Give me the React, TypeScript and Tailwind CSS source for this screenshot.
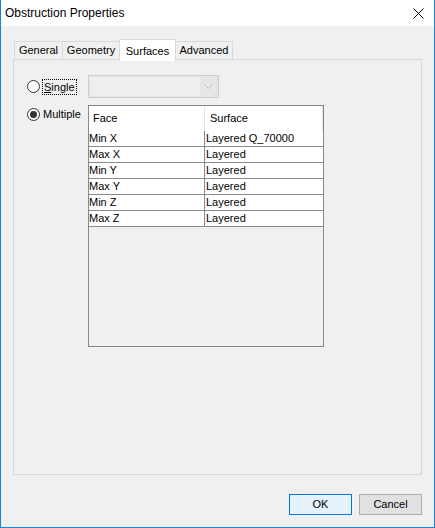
const rows = [
  { face: "Min X", surface: "Layered Q_70000" },
  { face: "Max X", surface: "Layered" },
  { face: "Min Y", surface: "Layered" },
  { face: "Max Y", surface: "Layered" },
  { face: "Min Z", surface: "Layered" },
  { face: "Max Z", surface: "Layered" },
];

const tabs = [
  { label: "General", width: "w-[49px]" },
  { label: "Geometry", width: "w-[58px]" },
  { label: "Surfaces", width: "w-[57px]", active: true },
  { label: "Advanced", width: "w-[58px]" },
];

function Radio({ checked }: { checked?: boolean }) {
  return (
    <span className="flex size-[13px] shrink-0 items-center justify-center rounded-full border border-[#333333] bg-white">
      {checked && <span className="size-[7px] rounded-full bg-[#333333]" />}
    </span>
  );
}

export default function App() {
  return (
    <div className="flex h-[528px] w-[435px] flex-col border-x border-b border-[#1883d7] bg-[#f0f0f0] font-['Liberation_Sans',Arial,sans-serif] text-[11px] text-black">
      <div className="flex h-[26px] shrink-0 items-center justify-between bg-white pl-[4px] pr-[10px]">
        <span className="text-[12px]">Obstruction Properties</span>
        <svg width="11" height="11" viewBox="0 0 11 11" className="mt-[1px]">
          <path d="M0.5 0.5 L10.5 10.5 M10.5 0.5 L0.5 10.5" stroke="#000" strokeWidth="1" />
        </svg>
      </div>

      <div className="flex flex-1 flex-col px-[12px] pt-[13px]">
        <div className="flex h-[20px] items-end pl-[1px]">
          {tabs.map((tab, i) =>
            tab.active ? (
              <div
                key={tab.label}
                className={`relative z-10 -mb-[2px] flex h-[22px] ${tab.width} items-start justify-center border-x border-t border-[#d9d9d9] bg-white pt-[3px] ${i > 0 ? "-ml-px" : ""}`}
              >
                {tab.label}
              </div>
            ) : (
              <div
                key={tab.label}
                className={`flex h-[18px] ${tab.width} items-center justify-center border-x border-t border-[#d9d9d9] bg-[#f0f0f0] ${i > 0 ? "-ml-px" : ""}`}
              >
                {tab.label}
              </div>
            ),
          )}
        </div>

        <div className="flex h-[416px] flex-col border border-[#d9d9d9] bg-[#f0f0f0] pl-[13px] pt-[15px]">
          <div className="flex h-[23px] items-center">
            <div className="flex w-[61px] items-center">
              <Radio />
              <span className="ml-[2px] border border-dotted border-black px-[1px] leading-[14px]">
                <span className="underline">S</span>ingle
              </span>
            </div>
            <div className="flex h-[23px] w-[131px] items-center justify-end border border-[#cccccc] bg-[#e6e6e6] p-[1px]">
              <div className="h-full flex-1 bg-[#eeeeee]" />
              <div className="flex h-full w-[17px] items-center justify-center">
                <svg width="9" height="5" viewBox="0 0 9 5">
                  <path d="M0.5 0.5 L4.5 4.5 L8.5 0.5" stroke="#bfbfbf" fill="none" strokeWidth="1" />
                </svg>
              </div>
            </div>
          </div>

          <div className="mt-[7px] flex items-start">
            <div className="mt-[2px] flex w-[61px] items-center">
              <Radio checked />
              <span className="ml-[3px] leading-[14px]">Multiple</span>
            </div>
            <div className="flex h-[242px] w-[236px] flex-col border border-[#828790] bg-[#f0f0f0]">
              <div className="flex h-[25px] shrink-0 items-center bg-white">
                <div className="flex h-full w-[116px] items-center border-r border-[#e5e5e5] pl-[4px]">Face</div>
                <div className="flex h-full flex-1 items-center border-r border-[#e5e5e5] pl-[5px]">Surface</div>
              </div>
              {rows.map((row) => (
                <div key={row.face} className="flex h-[16px] shrink-0 items-center border-b border-[#8a8a8a] bg-white">
                  <div className="flex h-full w-[116px] items-center border-r border-[#8a8a8a]">{row.face}</div>
                  <div className="flex h-full flex-1 items-center pl-[1px]">{row.surface}</div>
                </div>
              ))}
            </div>
          </div>
        </div>

        <div className="mt-[19px] flex justify-end gap-[7px]">
          <button className="flex h-[21px] w-[63px] items-center justify-center border border-[#0078d7] bg-[#e5f1fb]">
            OK
          </button>
          <button className="flex h-[21px] w-[63px] items-center justify-center border border-[#adadad] bg-[#e1e1e1]">
            Cancel
          </button>
        </div>
      </div>
    </div>
  );
}
